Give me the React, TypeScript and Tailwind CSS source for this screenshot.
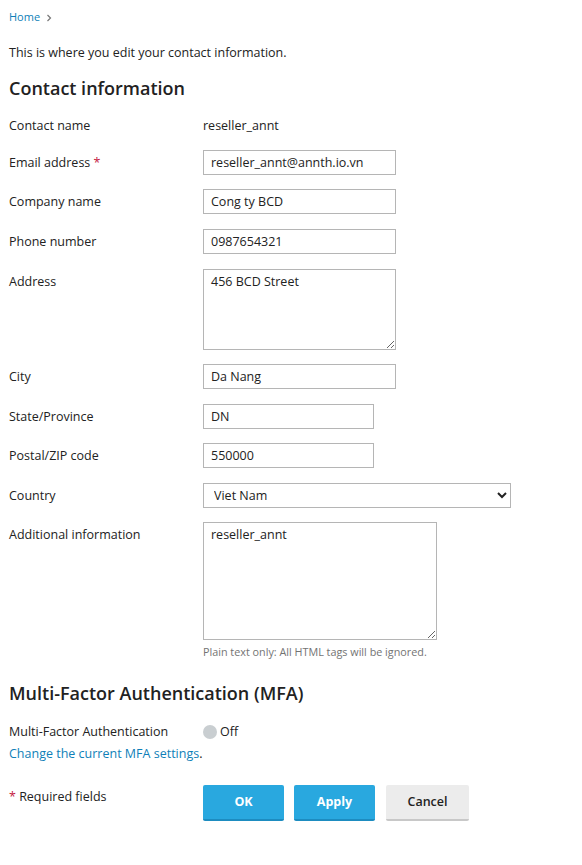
import React from "react";

const font = { fontFamily: '"Open Sans", "Liberation Sans", sans-serif' };

function Label({ children }: { children: React.ReactNode }) {
  return <div className="w-[194px] shrink-0 pt-[4px] text-[12.5px] leading-[18px] text-[#222]">{children}</div>;
}

export default function App() {
  return (
    <div style={font} className="min-h-[865px] w-[582px] bg-white pl-[9px] pt-[9px] text-[#222]">
      <div className="flex items-center gap-[5px] text-[11px] leading-[16px]">
        <span className="text-[#0f7fb8]">Home</span>
        <svg width="8" height="8" viewBox="0 0 8 8" className="mt-[1px]">
          <path d="M2.5 1 L5.5 4 L2.5 7" fill="none" stroke="#777" strokeWidth="1.2" />
        </svg>
      </div>

      <p className="mt-[19px] text-[12.5px] leading-[18px]">This is where you edit your contact information.</p>

      <h2 className="mt-[14px] text-[18px] font-semibold leading-[24px] text-[#222]">Contact information</h2>

      <div className="mt-[13px] flex">
        <Label>Contact name</Label>
        <div className="pt-[4px] text-[12.5px] leading-[18px]">reseller_annt</div>
      </div>

      <div className="mt-[15px] flex items-start">
        <Label>
          Email address <span className="text-[#c4203f]">*</span>
        </Label>
        <input readOnly value="reseller_annt@annth.io.vn" className="h-[25px] w-[193px] border border-[#b5b5b5] px-[7px] text-[12.5px] text-[#222] outline-none" />
      </div>

      <div className="mt-[14px] flex items-start">
        <Label>Company name</Label>
        <input readOnly value="Cong ty BCD" className="h-[25px] w-[193px] border border-[#b5b5b5] px-[7px] text-[12.5px] text-[#222] outline-none" />
      </div>

      <div className="mt-[15px] flex items-start">
        <Label>Phone number</Label>
        <input readOnly value="0987654321" className="h-[25px] w-[193px] border border-[#b5b5b5] px-[7px] text-[12.5px] text-[#222] outline-none" />
      </div>

      <div className="mt-[15px] flex items-start">
        <Label>Address</Label>
        <textarea readOnly value="456 BCD Street" className="block h-[81px] w-[193px] border border-[#b5b5b5] px-[7px] py-[3px] text-[12.5px] leading-[18px] text-[#222] outline-none" />
      </div>

      <div className="mt-[14px] flex items-start">
        <Label>City</Label>
        <input readOnly value="Da Nang" className="h-[25px] w-[193px] border border-[#b5b5b5] px-[7px] text-[12.5px] text-[#222] outline-none" />
      </div>

      <div className="mt-[15px] flex items-start">
        <Label>State/Province</Label>
        <input readOnly value="DN" className="h-[25px] w-[171px] border border-[#b5b5b5] px-[7px] text-[12.5px] text-[#222] outline-none" />
      </div>

      <div className="mt-[14px] flex items-start">
        <Label>Postal/ZIP code</Label>
        <input readOnly value="550000" className="h-[25px] w-[171px] border border-[#b5b5b5] px-[7px] text-[12.5px] text-[#222] outline-none" />
      </div>

      <div className="mt-[15px] flex items-start">
        <Label>Country</Label>
        <select defaultValue="vn" className="h-[25px] w-[308px] rounded-none border border-[#b5b5b5] bg-white pl-[6px] text-[12.5px] text-[#222] outline-none">
          <option value="vn">Viet Nam</option>
        </select>
      </div>

      <div className="mt-[14px] flex items-start">
        <Label>Additional information</Label>
        <div>
          <textarea readOnly value="reseller_annt" className="block h-[118px] w-[234px] border border-[#b5b5b5] px-[7px] py-[3px] text-[12.5px] leading-[18px] text-[#222] outline-none" />
          <div className="mt-[4px] text-[10.8px] leading-[15px] text-[#737373]">Plain text only: All HTML tags will be ignored.</div>
        </div>
      </div>

      <h2 className="mt-[22px] text-[18px] font-semibold leading-[24px] text-[#222]">Multi-Factor Authentication (MFA)</h2>

      <div className="mt-[18px] flex items-center">
        <div className="w-[194px] shrink-0 text-[12.5px] leading-[18px]">Multi-Factor Authentication</div>
        <div className="flex items-center gap-[3px] text-[12.5px] leading-[18px]">
          <span className="inline-block h-[14px] w-[14px] rounded-full bg-[#c9ced1]" />
          <span>Off</span>
        </div>
      </div>

      <div className="mt-[4px] text-[12.5px] leading-[18px]">
        <span className="text-[#0f7fb8]">Change the current MFA settings</span>.
      </div>

      <div className="mt-[22px] flex items-start">
        <div className="w-[194px] shrink-0 pt-[3px] text-[12.5px] leading-[18px]">
          <span className="text-[#c4203f]">*</span> Required fields
        </div>
        <div className="flex gap-[10px]">
          <button className="h-[36px] w-[81px] rounded-[2px] border-b-2 border-[#1d8cc0] bg-[#29a8df] text-[12.5px] font-bold text-white">OK</button>
          <button className="h-[36px] w-[81px] rounded-[2px] border-b-2 border-[#1d8cc0] bg-[#29a8df] text-[12.5px] font-bold text-white">Apply</button>
          <button className="ml-[1px] h-[36px] w-[83px] rounded-[2px] border-b-2 border-[#c8c8c8] bg-[#ececec] text-[12.5px] font-semibold text-[#222]">Cancel</button>
        </div>
      </div>
    </div>
  );
}
